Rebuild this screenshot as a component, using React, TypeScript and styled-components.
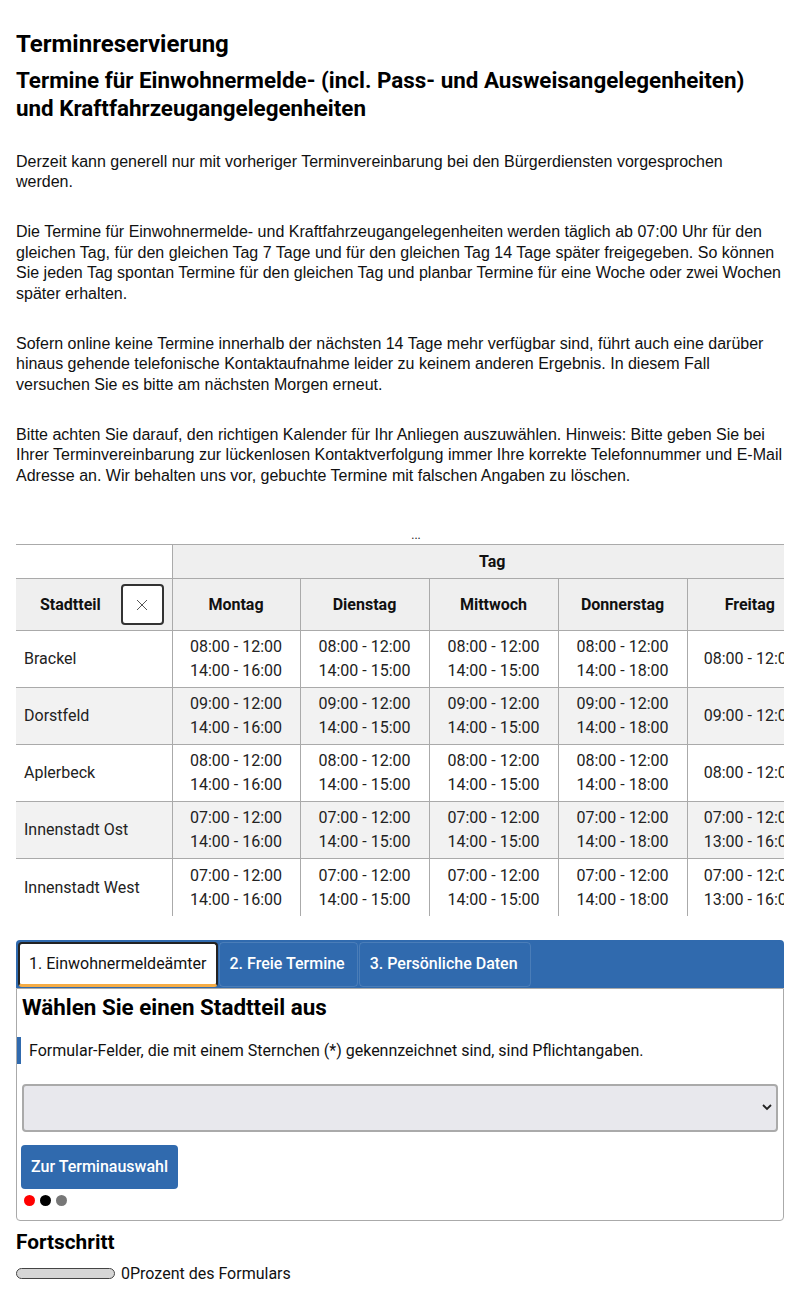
import React from "react";
import styled, { createGlobalStyle } from "styled-components";

const GlobalStyle = createGlobalStyle`
  html, body { margin: 0; padding: 0; background: #fff; }
  body { font-family: Roboto, "Liberation Sans", Arial, sans-serif; color: #111; }
  * { box-sizing: border-box; }
`;

const Page = styled.div`
  padding: 31px 16px 20px;
  width: 800px;
`;

const Title = styled.h1`
  margin: 0;
  font: 700 24px/26px Roboto, sans-serif;
  color: #000;
`;

const SubTitle = styled.h2`
  margin: 9px 0 0;
  font: 700 22.4px/28px Roboto, sans-serif;
  color: #000;
`;

const Para = styled.p`
  margin: 29.6px 0 0;
  font: 400 16px/20.5px "Liberation Sans", Arial, sans-serif;
  color: #111;
`;

const TableScroll = styled.div`
  margin-top: 40px;
  width: 768px;
  overflow-x: auto;
  scrollbar-width: none;
  &::-webkit-scrollbar { display: none; }
`;

const Table = styled.table`
  border-collapse: collapse;
  table-layout: fixed;
  width: 796px;
  font: 400 16px/24px Roboto, sans-serif;
  color: #222;
`;

const Caption = styled.caption`
  font: 400 12px/18px Roboto, sans-serif;
  text-align: center;
  color: #222;
  padding-left: 4px;
`;

const HeadRow = styled.tr<{ $h: number }>`
  height: ${(p) => p.$h}px;
`;

const BlankHead = styled.th`
  background: #fff;
  border-top: 1px solid #aaa;
  border-bottom: 1px solid #aaa;
  border-right: 1px solid #aaa;
  padding: 0;
`;

const HeadCell = styled.th`
  background: #efefef;
  border: 1px solid #aaa;
  font-weight: 700;
  color: #111;
  text-align: center;
  padding: 0 6px;
  &:last-child { border-right: none; }
`;

const DistrictHead = styled.th`
  background: #efefef;
  border-top: 1px solid #aaa;
  border-bottom: 1px solid #aaa;
  border-right: 1px solid #aaa;
  padding: 0 8px 0 24px;
  font-weight: 700;
  color: #111;
`;

const DistrictHeadInner = styled.div`
  display: flex;
  align-items: center;
  justify-content: space-between;
`;

const ClearButton = styled.button`
  width: 43px;
  height: 41px;
  border: 2px solid #333;
  border-radius: 4px;
  background: #fff;
  display: flex;
  align-items: center;
  justify-content: center;
  padding: 0;
`;

const DataRow = styled.tr<{ $alt: boolean; $last: boolean }>`
  height: 57px;
  background: ${(p) => (p.$alt ? "#f2f2f2" : "#fff")};
  border-bottom: ${(p) => (p.$last ? "none" : "1px solid #aaa")};
`;

const NameCell = styled.td`
  padding: 0 8px;
  border-right: 1px solid #aaa;
  text-align: left;
  white-space: nowrap;
`;

const TimeCell = styled.td`
  padding: 0;
  border-right: 1px solid #aaa;
  text-align: center;
  white-space: nowrap;
  &:last-child { border-right: none; }
`;

const Panel = styled.section`
  margin-top: 24px;
  width: 768px;
`;

const TabBar = styled.div`
  display: flex;
  gap: 1px;
  padding: 2px 2px 1px;
  background: #306aae;
  border-radius: 4px 4px 0 0;
`;

const Tab = styled.div<{ $active: boolean }>`
  height: 45px;
  display: flex;
  align-items: center;
  padding: ${(p) => (p.$active ? "0 9px" : "0 12px 0 10px")};
  border-radius: 4px;
  font: ${(p) => (p.$active ? "400" : "500")} 16px/20px Roboto, sans-serif;
  color: ${(p) => (p.$active ? "#111" : "#fff")};
  background: ${(p) => (p.$active ? "#fff" : "transparent")};
  border: ${(p) => (p.$active ? "2px solid #222" : "1px solid rgba(255,255,255,0.13)")};
  border-bottom: ${(p) => (p.$active ? "3px solid #f5ac45" : "1px solid rgba(255,255,255,0.13)")};
`;

const PanelBody = styled.div`
  border: 1px solid #aaa;
  border-radius: 0 0 4px 4px;
  padding: 4px 5px 14px;
`;

const PanelTitle = styled.h3`
  margin: 0;
  font: 700 22.4px/28px Roboto, sans-serif;
  color: #000;
`;

const Info = styled.p`
  margin: 16px 0 0 -5px;
  padding-left: 8px;
  border-left: 4px solid #306aae;
  font: 400 16px/27px Roboto, sans-serif;
  color: #111;
`;

const SelectWrap = styled.div`
  position: relative;
  margin-top: 20px;
`;

const Select = styled.select`
  display: block;
  width: 100%;
  height: 48px;
  appearance: none;
  -webkit-appearance: none;
  background: #e8e8ed;
  border: 2px solid #aaa;
  border-radius: 4px;
  font: 400 16px Roboto, sans-serif;
`;

const Chevron = styled.svg`
  position: absolute;
  right: 6px;
  top: 20px;
  pointer-events: none;
`;

const PrimaryButton = styled.button`
  margin-top: 13px;
  height: 44px;
  padding: 0 10px;
  border: none;
  border-radius: 4px;
  background: #306aae;
  color: #fff;
  font: 500 16px/20px Roboto, sans-serif;
  margin-left: -1px;
`;

const Dots = styled.div`
  display: flex;
  gap: 5px;
  margin-top: 6px;
  padding-left: 2px;
`;

const Dot = styled.span<{ $c: string }>`
  width: 11px;
  height: 11px;
  border-radius: 50%;
  background: ${(p) => p.$c};
`;

const ProgressTitle = styled.h3`
  margin: 9px 0 0;
  font: 700 20.8px/24px Roboto, sans-serif;
  color: #000;
`;

const ProgressRow = styled.div`
  display: flex;
  align-items: center;
  gap: 6px;
  margin-top: 10px;
  font: 400 16px/20px Roboto, sans-serif;
  color: #111;
`;

const ProgressBar = styled.div`
  width: 99px;
  height: 11px;
  border: 1px solid #444;
  border-radius: 6px;
  background: #d6d6d6;
`;

type Row = { name: string; times: string[][] };

const rows: Row[] = [
  {
    name: "Brackel",
    times: [
      ["08:00 - 12:00", "14:00 - 16:00"],
      ["08:00 - 12:00", "14:00 - 15:00"],
      ["08:00 - 12:00", "14:00 - 15:00"],
      ["08:00 - 12:00", "14:00 - 18:00"],
      ["08:00 - 12:00"],
    ],
  },
  {
    name: "Dorstfeld",
    times: [
      ["09:00 - 12:00", "14:00 - 16:00"],
      ["09:00 - 12:00", "14:00 - 15:00"],
      ["09:00 - 12:00", "14:00 - 15:00"],
      ["09:00 - 12:00", "14:00 - 18:00"],
      ["09:00 - 12:00"],
    ],
  },
  {
    name: "Aplerbeck",
    times: [
      ["08:00 - 12:00", "14:00 - 16:00"],
      ["08:00 - 12:00", "14:00 - 15:00"],
      ["08:00 - 12:00", "14:00 - 15:00"],
      ["08:00 - 12:00", "14:00 - 18:00"],
      ["08:00 - 12:00"],
    ],
  },
  {
    name: "Innenstadt Ost",
    times: [
      ["07:00 - 12:00", "14:00 - 16:00"],
      ["07:00 - 12:00", "14:00 - 15:00"],
      ["07:00 - 12:00", "14:00 - 15:00"],
      ["07:00 - 12:00", "14:00 - 18:00"],
      ["07:00 - 12:00", "13:00 - 16:00"],
    ],
  },
  {
    name: "Innenstadt West",
    times: [
      ["07:00 - 12:00", "14:00 - 16:00"],
      ["07:00 - 12:00", "14:00 - 15:00"],
      ["07:00 - 12:00", "14:00 - 15:00"],
      ["07:00 - 12:00", "14:00 - 18:00"],
      ["07:00 - 12:00", "13:00 - 16:00"],
    ],
  },
];

const days = ["Montag", "Dienstag", "Mittwoch", "Donnerstag", "Freitag"];
const dayWidths = [128, 129, 129, 129, 125];

export default function App() {
  return (
    <Page>
      <GlobalStyle />
      <Title>Terminreservierung</Title>
      <SubTitle>
        Termine für Einwohnermelde- (incl. Pass- und Ausweisangelegenheiten) und Kraftfahrzeugangelegenheiten
      </SubTitle>
      <Para>
        Derzeit kann generell nur mit vorheriger Terminvereinbarung bei den Bürgerdiensten vorgesprochen werden.
      </Para>
      <Para>
        Die Termine für Einwohnermelde- und Kraftfahrzeugangelegenheiten werden täglich ab 07:00 Uhr für den
        gleichen Tag, für den gleichen Tag 7 Tage und für den gleichen Tag 14 Tage später freigegeben. So können
        Sie jeden Tag spontan Termine für den gleichen Tag und planbar Termine für eine Woche oder zwei Wochen
        später erhalten.
      </Para>
      <Para>
        Sofern online keine Termine innerhalb der nächsten 14 Tage mehr verfügbar sind, führt auch eine darüber
        hinaus gehende telefonische Kontaktaufnahme leider zu keinem anderen Ergebnis. In diesem Fall versuchen
        Sie es bitte am nächsten Morgen erneut.
      </Para>
      <Para>
        Bitte achten Sie darauf, den richtigen Kalender für Ihr Anliegen auszuwählen. Hinweis: Bitte geben Sie bei
        Ihrer Terminvereinbarung zur lückenlosen Kontaktverfolgung immer Ihre korrekte Telefonnummer und E-Mail
        Adresse an. Wir behalten uns vor, gebuchte Termine mit falschen Angaben zu löschen.
      </Para>

      <TableScroll>
        <Table>
          <Caption>...</Caption>
          <colgroup>
            <col style={{ width: 156 }} />
            {days.map((d, i) => (
              <col key={d} style={{ width: dayWidths[i] }} />
            ))}
          </colgroup>
          <thead>
            <HeadRow $h={34}>
              <BlankHead />
              <HeadCell colSpan={5}>Tag</HeadCell>
            </HeadRow>
            <HeadRow $h={52}>
              <DistrictHead>
                <DistrictHeadInner>
                  <span>Stadtteil</span>
                  <ClearButton aria-label="Filter zurücksetzen">
                    <svg width="12" height="12" viewBox="0 0 12 12">
                      <path d="M1 1 L11 11 M11 1 L1 11" stroke="#555" strokeWidth="1" fill="none" />
                    </svg>
                  </ClearButton>
                </DistrictHeadInner>
              </DistrictHead>
              {days.map((d) => (
                <HeadCell key={d}>{d}</HeadCell>
              ))}
            </HeadRow>
          </thead>
          <tbody>
            {rows.map((r, i) => (
              <DataRow key={r.name} $alt={i % 2 === 1} $last={i === rows.length - 1}>
                <NameCell>{r.name}</NameCell>
                {r.times.map((t, j) => (
                  <TimeCell key={j}>
                    {t.map((line, k) => (
                      <div key={k}>{line}</div>
                    ))}
                  </TimeCell>
                ))}
              </DataRow>
            ))}
          </tbody>
        </Table>
      </TableScroll>

      <Panel>
        <TabBar>
          <Tab $active={true}>1. Einwohnermeldeämter</Tab>
          <Tab $active={false}>2. Freie Termine</Tab>
          <Tab $active={false}>3. Persönliche Daten</Tab>
        </TabBar>
        <PanelBody>
          <PanelTitle>Wählen Sie einen Stadtteil aus</PanelTitle>
          <Info>Formular-Felder, die mit einem Sternchen (*) gekennzeichnet sind, sind Pflichtangaben.</Info>
          <SelectWrap>
            <Select aria-label="Stadtteil">
              <option value=""></option>
            </Select>
            <Chevron width="10" height="7" viewBox="0 0 10 7">
              <path d="M1 1 L5 5 L9 1" stroke="#222" strokeWidth="1.8" fill="none" />
            </Chevron>
          </SelectWrap>
          <PrimaryButton>Zur Terminauswahl</PrimaryButton>
          <Dots>
            <Dot $c="#ff0000" />
            <Dot $c="#000000" />
            <Dot $c="#777777" />
          </Dots>
        </PanelBody>
      </Panel>

      <ProgressTitle>Fortschritt</ProgressTitle>
      <ProgressRow>
        <ProgressBar />
        <span>0Prozent des Formulars</span>
      </ProgressRow>
    </Page>
  );
}
